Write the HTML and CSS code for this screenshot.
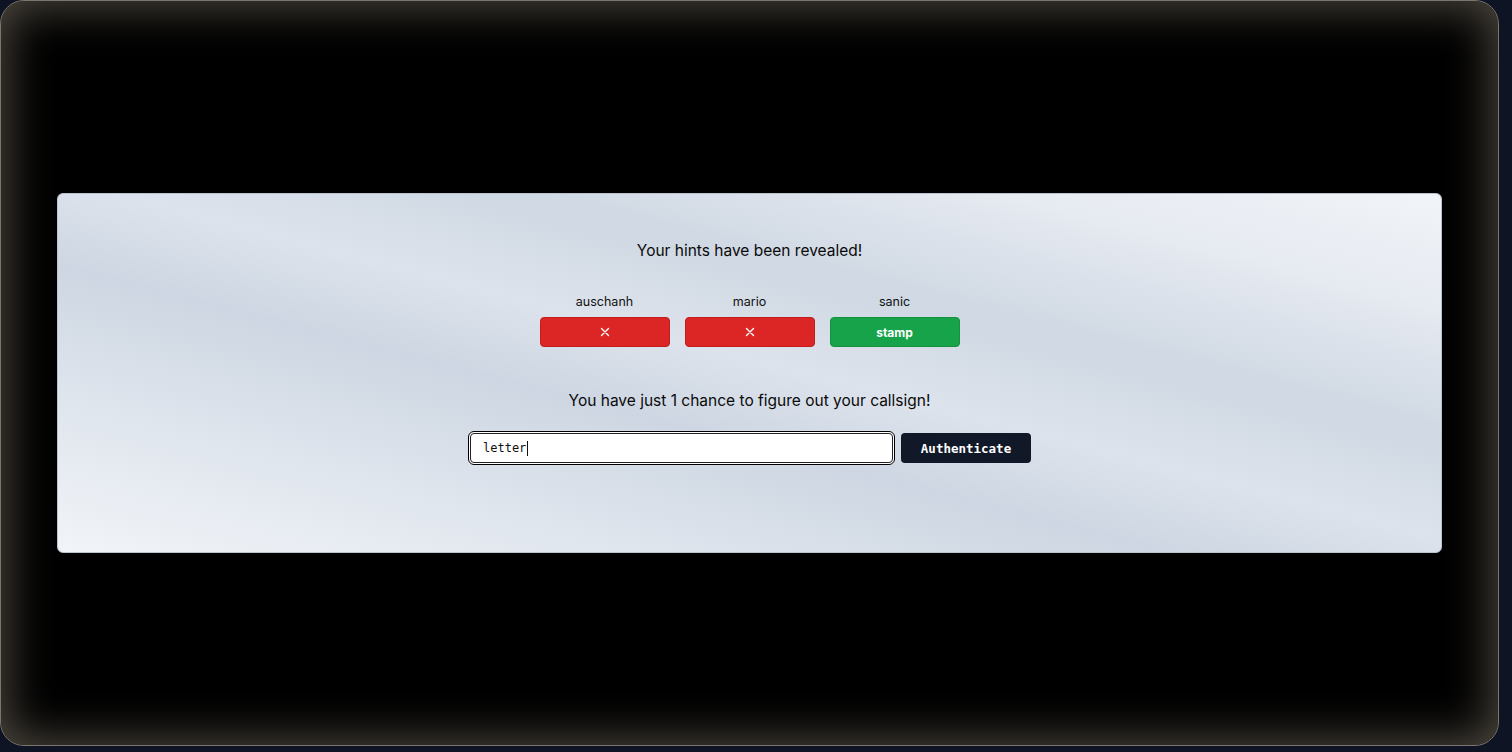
FILE: index.html
```html
<!DOCTYPE html>
<html>
<head>
<meta charset="utf-8">
<link rel="stylesheet" href="styles.css">
</head>
<body>
<div class="window">
  <div class="card">
    <h2 class="title">Your hints have been revealed!</h2>
    <div class="hints">
      <div class="hint">
        <div class="hint-name">auschanh</div>
        <div class="hint-btn wrong">
          <svg width="10" height="10" viewBox="0 0 10 10"><path d="M1.5 1.5 L8.5 8.5 M8.5 1.5 L1.5 8.5" stroke="#fff" stroke-width="1.4" stroke-linecap="round"/></svg>
        </div>
      </div>
      <div class="hint">
        <div class="hint-name">mario</div>
        <div class="hint-btn wrong">
          <svg width="10" height="10" viewBox="0 0 10 10"><path d="M1.5 1.5 L8.5 8.5 M8.5 1.5 L1.5 8.5" stroke="#fff" stroke-width="1.4" stroke-linecap="round"/></svg>
        </div>
      </div>
      <div class="hint">
        <div class="hint-name">sanic</div>
        <div class="hint-btn right">stamp</div>
      </div>
    </div>
    <p class="subtitle">You have just 1 chance to figure out your callsign!</p>
    <form class="auth">
      <div class="input-wrap"><input class="field" type="text" value="letter"><span class="caret"></span></div>
      <button class="auth-btn" type="button">Authenticate</button>
    </form>
  </div>
</div>
</body>
</html>
```

FILE: styles.css
```css
html, body {
  margin: 0;
  padding: 0;
}
body {
  width: 1512px;
  height: 752px;
  background: #0e1424;
  font-family: "Inter", "Liberation Sans", Arial, sans-serif;
  overflow: hidden;
}
.window {
  box-sizing: border-box;
  width: 1499px;
  height: 746px;
  border: 1px solid #7a766d;
  border-radius: 24px;
  background: #000;
  box-shadow: inset 0 0 45px 6px #4e4940;
  display: flex;
  align-items: center;
  justify-content: center;
}
.card {
  box-sizing: border-box;
  width: 1385px;
  height: 360px;
  border-radius: 6px;
  border: 1px solid #b9c2cf;
  background: linear-gradient(to top right, #f1f4f8 0%, #dfe5ed 22%, #cdd6e2 40%, #dde3ec 52%, #cfd8e3 66%, #e6eaf1 84%, #f1f4f8 100%);
  display: flex;
  flex-direction: column;
  align-items: center;
  padding-top: 47px;
}
.title {
  margin: 0;
  font-size: 15.5px;
  font-weight: 400;
  line-height: 20px;
  color: #0a0a0a;
}
.hints {
  display: flex;
  gap: 15px;
  margin-top: 33px;
}
.hint {
  display: flex;
  flex-direction: column;
  align-items: center;
}
.hint-name {
  font-size: 12.5px;
  line-height: 16px;
  color: #111;
  margin-bottom: 7px;
}
.hint-btn {
  box-sizing: border-box;
  width: 130px;
  height: 30px;
  border-radius: 4px;
  display: flex;
  align-items: center;
  justify-content: center;
  color: #fff;
  font-size: 12px;
  font-weight: 700;
}
.wrong {
  background: #dc2626;
  border: 1px solid #c21d1d;
}
.right {
  background: #16a34a;
  border: 1px solid #13913f;
}
.subtitle {
  margin: 44px 0 0;
  font-size: 15.5px;
  line-height: 20px;
  color: #0a0a0a;
}
.auth {
  display: flex;
  align-items: center;
  gap: 6px;
  margin: 20px 0 0;
}
.input-wrap {
  position: relative;
  box-sizing: border-box;
  width: 427px;
  height: 34px;
  border: 1.5px solid #000;
  border-radius: 6px;
  padding: 1px;
  background: #fff;
}
.field {
  box-sizing: border-box;
  width: 100%;
  height: 100%;
  border: 1px solid #222;
  border-radius: 4px;
  background: #fff;
  padding: 0 12px;
  font-family: "DejaVu Sans Mono", "Liberation Mono", monospace;
  font-size: 12px;
  color: #111;
  outline: none;
}
.caret {
  position: absolute;
  left: 58px;
  top: 9px;
  width: 1px;
  height: 15px;
  background: #111;
}
.auth-btn {
  box-sizing: border-box;
  width: 130px;
  height: 30px;
  border: none;
  border-radius: 4px;
  background: #111827;
  color: #fff;
  font-family: "DejaVu Sans Mono", "Liberation Mono", monospace;
  font-size: 12.5px;
  font-weight: 700;
  padding: 0;
}
```
